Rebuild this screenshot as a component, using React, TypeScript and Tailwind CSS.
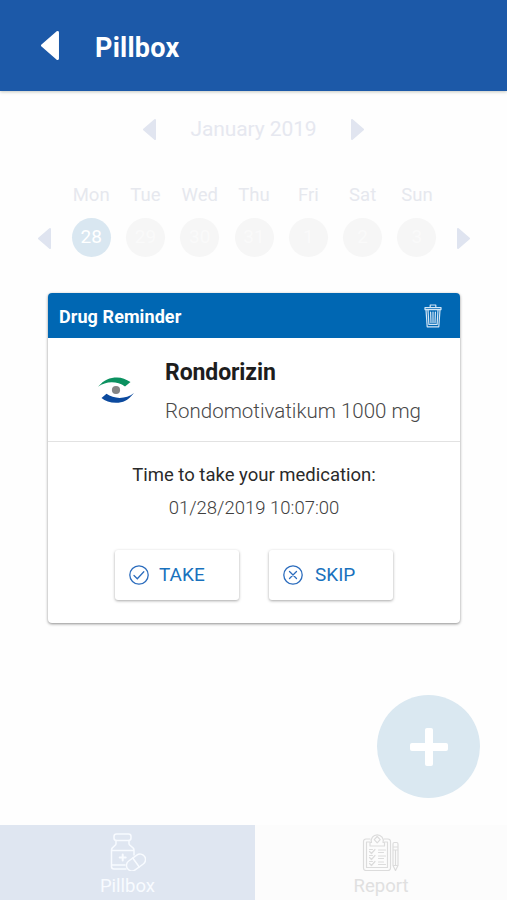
import React from 'react';

const days = [
  { name: 'Mon', date: '28' },
  { name: 'Tue', date: '29' },
  { name: 'Wed', date: '30' },
  { name: 'Thu', date: '31' },
  { name: 'Fri', date: '1' },
  { name: 'Sat', date: '2' },
  { name: 'Sun', date: '3' },
];

const Arrow = ({ className }: { className: string }) => (
  <svg viewBox="0 0 13 21" className={className} fill="currentColor" stroke="currentColor" strokeWidth="2" strokeLinejoin="round">
    <path d="M12 1 L1 10.5 L12 20 Z" />
  </svg>
);

const TrashIcon = () => (
  <svg viewBox="0 0 18 24" className="w-[18px] h-6 shrink-0" fill="none" stroke="#d3e6f6" strokeWidth="1.2" strokeLinejoin="round" strokeLinecap="round">
    <path d="M1 3.6h16v2H1zM6.2 3.4V1h5.6v2.4M2 5.8l1.2 17h11.6L16 5.8M4 5.8l.9 14.7h8.2L14 5.8M6.6 8l.4 11M9 8v11M11.4 8L11 19" />
  </svg>
);

const EyeLogo = () => (
  <svg viewBox="0 0 36 26" className="w-9 h-[26px] shrink-0">
    <path d="M0 9.8 C6 2.5 12 0.4 19 0.4 C24 0.4 28 2.2 32.5 5 L27 9.4 C19 3.8 8 3.8 0 9.8Z" fill="#0b9160" />
    <path d="M36 16 C30 23.5 25 25.8 18 25.8 C12 25.8 7 24 3.5 21 L8.5 16.8 C16 22.3 28 22.5 36 16Z" fill="#0c4a9e" />
    <circle cx="18" cy="13" r="4.1" fill="#858585" />
  </svg>
);

const PillboxIcon = () => (
  <svg viewBox="0 0 36 38" className="w-9 h-[38px]" fill="none" stroke="#f8fbff" strokeWidth="1.5" strokeLinejoin="round" strokeLinecap="round">
    <rect x="4" y="1" width="17" height="6.500" rx="2.500" />
    <path d="M6 7.500v3.500c0 2-4.500 2.500-4.500 6v16.500c0 1.500.8 2.500 2.500 2.500h12M19 7.500v3.500c0 2 5 2.500 5 6v5M1.500 17.500H24M1.500 32H15" />
    <path d="M12.700 21.500v6M9.700 24.500h6" strokeWidth="2" />
    <g transform="rotate(-36 26 29.500)">
      <rect x="15.500" y="24" width="21" height="11" rx="5.500" />
      <path d="M26 24v11" />
    </g>
  </svg>
);

const ReportIcon = () => (
  <svg viewBox="0 0 38 38" className="w-[38px] h-[38px]" fill="none" stroke="#dcdcdc" strokeWidth="1.2" strokeLinejoin="round" strokeLinecap="round">
    <path d="M8 6H4a2.500 2.500 0 0 0-2.500 2.500V35A2.500 2.500 0 0 0 4 37.500h22a2.500 2.500 0 0 0 2.500-2.500V8.500A2.500 2.500 0 0 0 26 6h-4" />
    <path d="M8 9H4.500v25.500h21V9h-3" />
    <path d="M8 13V9.500h1.500a6 6 0 1 1 11.500 0h1.500V13z" />
    <path d="M15.200 3.500l3 3.200-3 3.200-3-3.200z" />
    <path d="M13 16.500l-3.500 4-2-2M7.500 16.500h3M13 22.500l-3.500 4-2-2M7.500 22.500h3M13 28.500l-3.500 4-2-2M7.500 28.500h3" />
    <path d="M16.500 17h7M16.500 19.500h5M16.500 23h7M16.500 25.500h5M16.500 29h5M16.500 31.500h7" />
    <path d="M31 11a1.500 1.500 0 0 1 1.500-1.500h2A1.500 1.500 0 0 1 36 11v21.500L33.500 37.500 31 32.500zM31 14h5M31 17h5M31 32.500h5M33.500 17v15.500" />
  </svg>
);

const App = () => {
  return (
    <div className="w-full h-[900px] flex flex-col bg-[#fefefe] font-['Roboto',sans-serif] overflow-hidden">
      {/* Header */}
      <header className="h-[91px] shrink-0 bg-[#1c59a8] flex items-center pl-[41px] text-white shadow-[0_1px_3px_rgba(90,100,80,0.35)]">
        <Arrow className="w-[18px] h-[29px]" />
        <h1 className="ml-9 mt-1 text-[27px] leading-8 font-bold tracking-[0.25px]">Pillbox</h1>
      </header>

      {/* Month */}
      <div className="mt-6 h-7 flex items-center justify-center gap-[34.5px] text-[#e1e5f0]">
        <Arrow className="w-[13px] h-[21px]" />
        <span className="text-[21px] leading-7 text-[#e6e8f0] tracking-[-0.1px]">January 2019</span>
        <Arrow className="w-[13px] h-[21px] rotate-180" />
      </div>

      {/* Week */}
      <div className="mt-[38px] h-[76px] flex items-end pl-[38px] text-[#dfe4f0]">
        <Arrow className="w-[13px] h-[21px] mb-[8px]" />
        <div className="ml-[13px] flex">
          {days.map((day, i) => (
            <div key={day.name} className="w-[54.3px] flex flex-col items-center">
              <span className="text-[18.5px] leading-6 text-[#e6e8ee]">{day.name}</span>
              <span
                className={
                  i === 0
                    ? 'mt-[11px] size-[39px] rounded-full bg-[#d9e7f1] text-white text-[19px] flex items-center justify-center'
                    : 'mt-[11px] size-[39px] rounded-full bg-[#f6f6f6] text-[#fafafa] text-[19px] flex items-center justify-center'
                }
              >
                {day.date}
              </span>
            </div>
          ))}
        </div>
        <Arrow className="ml-[13px] w-[13px] h-[21px] mb-[8px] rotate-180" />
      </div>

      {/* Reminder card */}
      <section className="mt-[36px] ml-12 w-[412px] h-[330px] shrink-0 rounded-[4px] bg-white overflow-hidden shadow-[0_1px_3px_rgba(0,0,0,0.45)]">
        <div className="h-[45px] bg-[#0067b3] flex items-center justify-between pl-[11px] pr-[18px]">
          <h2 className="mt-0.5 text-white text-[18px] font-bold tracking-[0.08px]">Drug Reminder</h2>
          <TrashIcon />
        </div>
        <div className="h-[104px] flex items-center pl-[50px] border-b border-[#e2e2e2]">
          <EyeLogo />
          <div className="ml-[31px] pt-1">
            <h3 className="text-[23px] leading-[34px] font-bold text-[#1d1d1d] tracking-[-0.1px]">Rondorizin</h3>
            <p className="mt-1 text-[20.5px] leading-[34px] font-light text-[#484848] whitespace-nowrap">Rondomotivatikum 1000 mg</p>
          </div>
        </div>
        <div className="pt-[21px] flex flex-col items-center">
          <p className="text-[18.5px] leading-6 text-[#2a2a2a]">Time to take your medication:</p>
          <p className="mt-[9px] text-[18.5px] leading-6 font-light text-[#404040]">01/28/2019 10:07:00</p>
          <div className="mt-[30px] flex gap-[30px]">
            <button className="w-[124px] h-[50px] rounded-[3px] bg-white shadow-[0_1px_3px_rgba(0,0,0,0.35)] flex items-center pl-[14px] text-[#1971bd] text-[19px]">
              <svg viewBox="0 0 20 20" className="size-5" fill="none" stroke="#2b6cbd" strokeWidth="1.300" strokeLinecap="round">
                <circle cx="10" cy="10" r="9.200" />
                <path d="M5 10.500l3.300 3.200 6.500-7" />
              </svg>
              <span className="ml-[10px]">TAKE</span>
            </button>
            <button className="w-[124px] h-[50px] rounded-[3px] bg-white shadow-[0_1px_3px_rgba(0,0,0,0.35)] flex items-center pl-[14px] text-[#1971bd] text-[19px]">
              <svg viewBox="0 0 20 20" className="size-5" fill="none" stroke="#2b6cbd" strokeWidth="1.300" strokeLinecap="round">
                <circle cx="10" cy="10" r="9.200" />
                <path d="M6.500 6.500l7 7M13.500 6.500l-7 7" />
              </svg>
              <span className="ml-3">SKIP</span>
            </button>
          </div>
        </div>
      </section>

      {/* Add button */}
      <button className="mt-[72px] mr-[27px] self-end size-[103px] shrink-0 rounded-full bg-[#dae8f1] flex items-center justify-center">
        <svg viewBox="0 0 38 38" className="size-[38px]" fill="#ffffff">
          <rect x="15" y="0" width="8" height="38" rx="2" />
          <rect x="0" y="15" width="38" height="8" rx="2" />
        </svg>
      </button>

      {/* Bottom tabs */}
      <nav className="mt-auto h-[75px] shrink-0 flex text-[18.5px] leading-6">
        <div className="w-[255px] bg-[#dfe6f1] text-[#f8fbff] flex flex-col items-center pt-2">
          <PillboxIcon />
          <span className="mt-[3px]">Pillbox</span>
        </div>
        <div className="flex-1 bg-[#fcfcfc] text-[#e0e0e0] flex flex-col items-center pt-2">
          <ReportIcon />
          <span className="mt-[3px]">Report</span>
        </div>
      </nav>
    </div>
  );
};

export default App;
